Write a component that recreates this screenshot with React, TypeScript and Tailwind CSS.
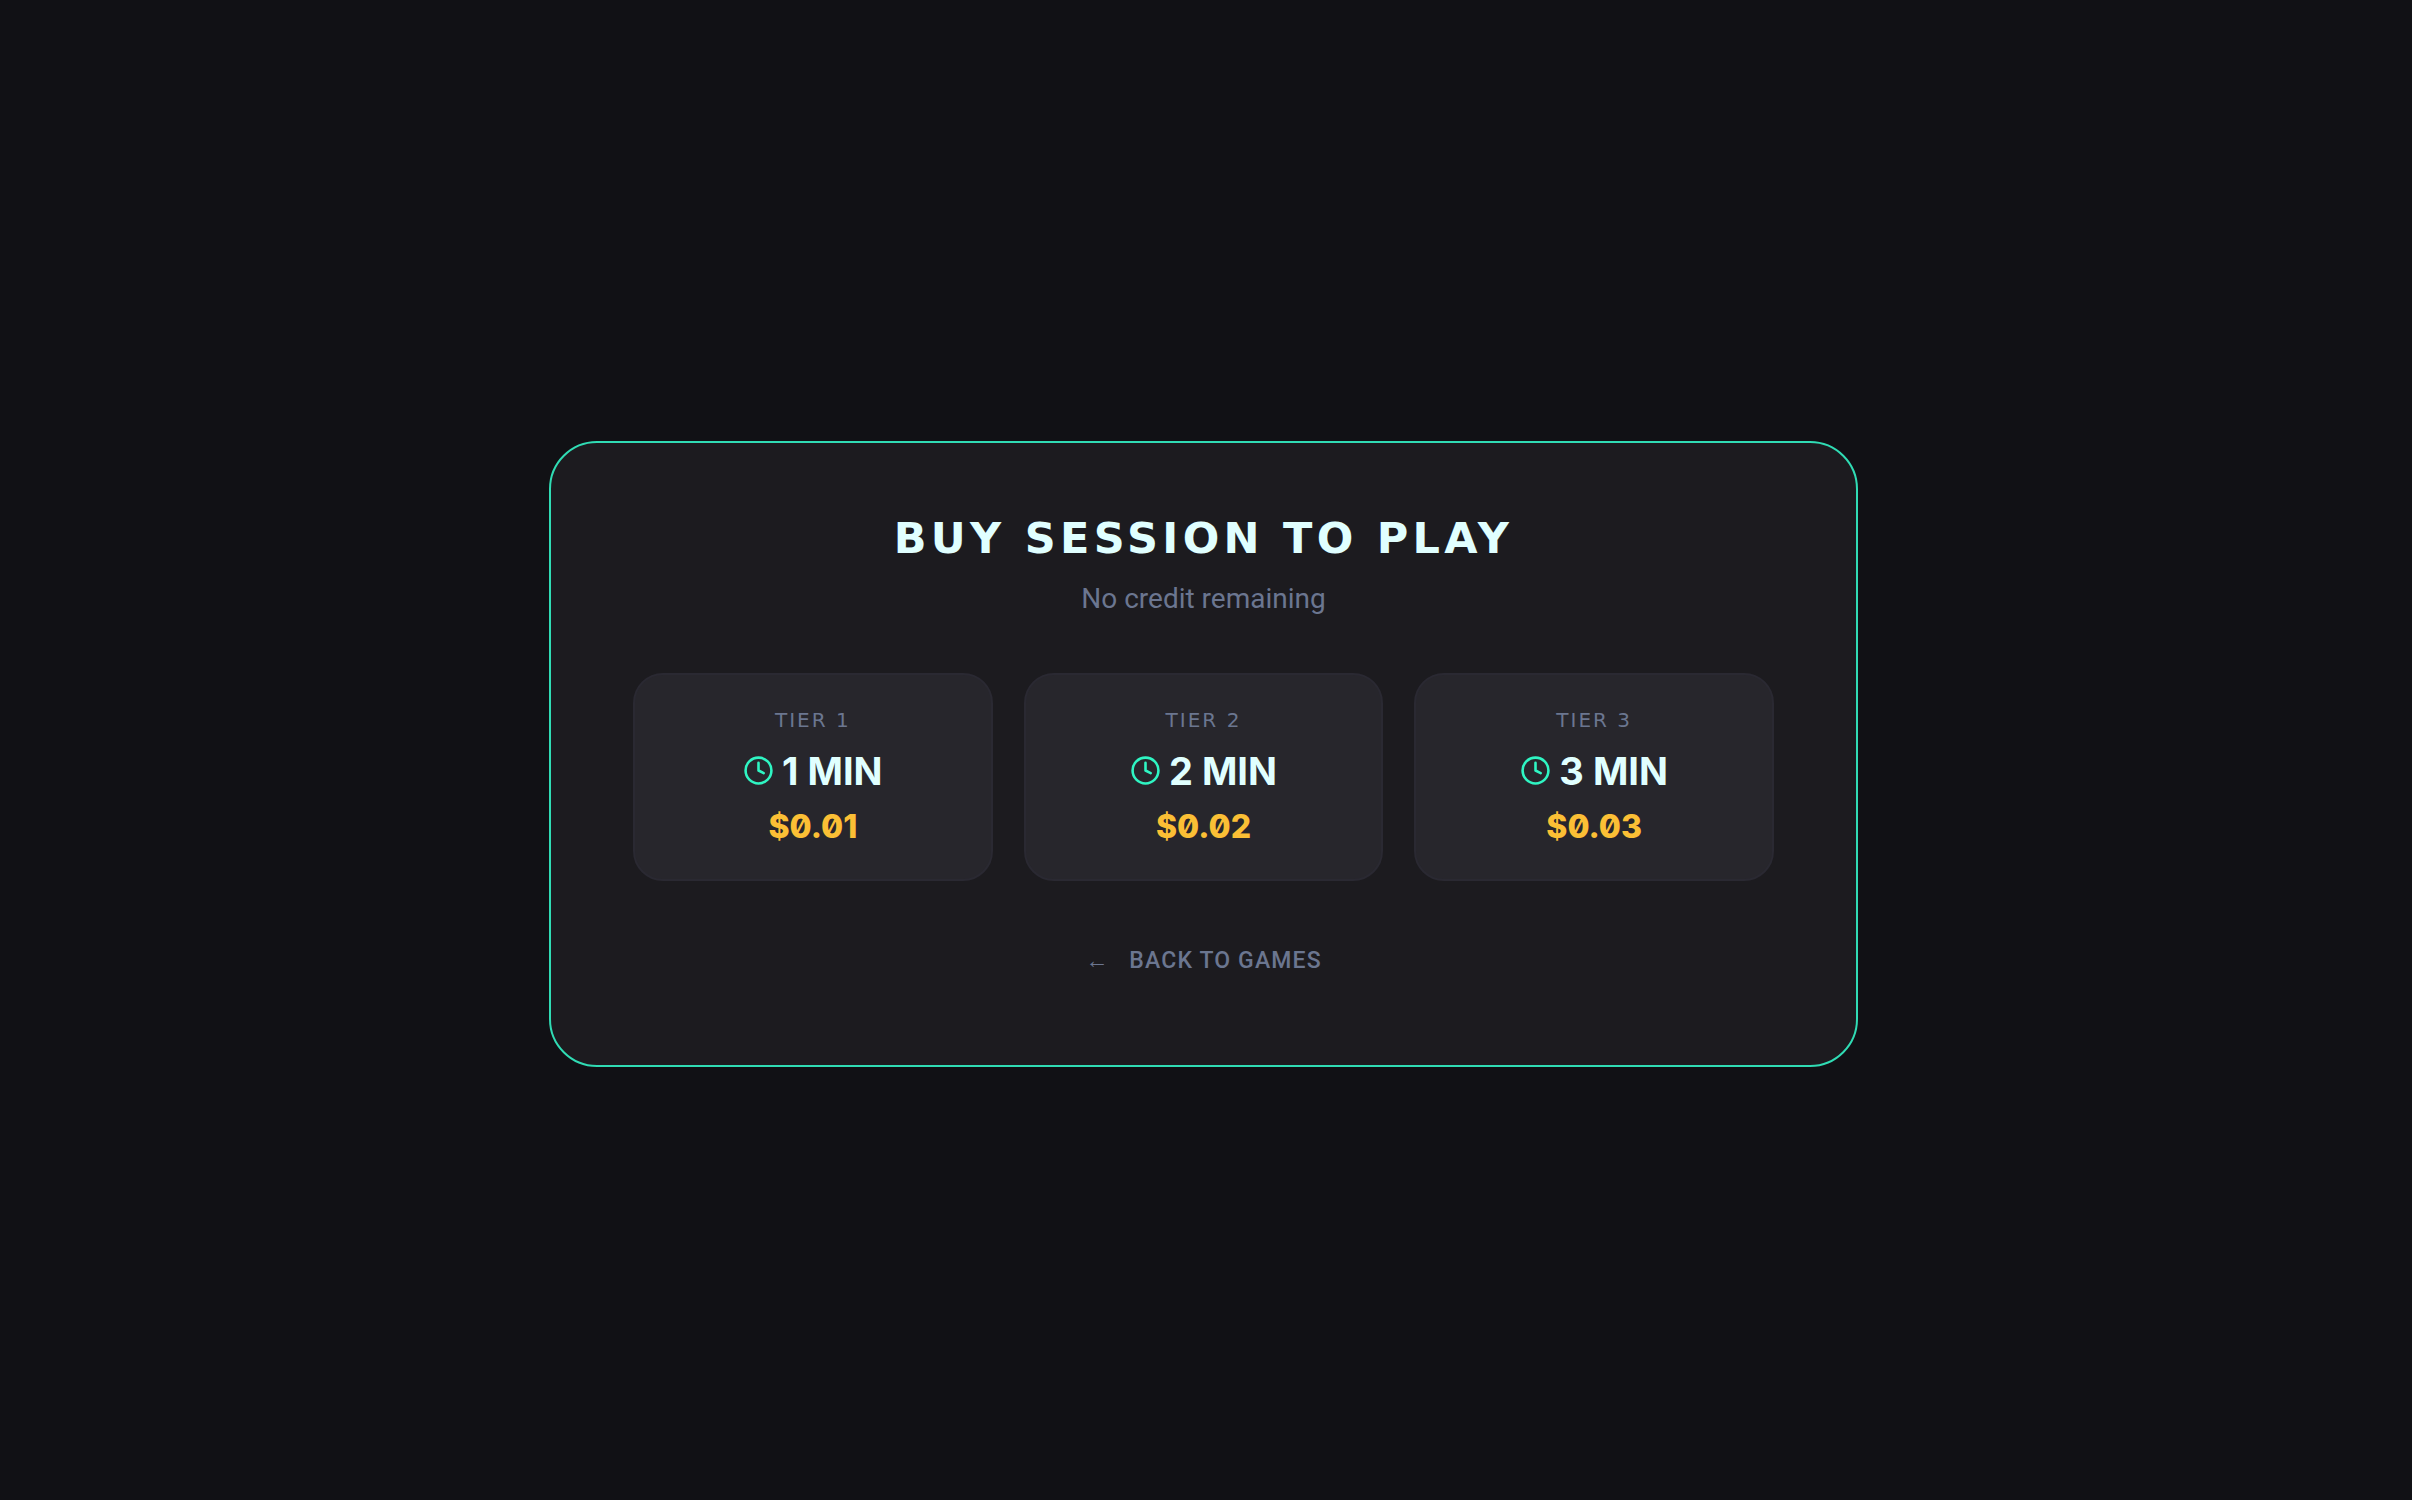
import { Clock } from "lucide-react";

interface Tier {
  id: number;
  minutes: number;
  price: string;
}

const TIERS: Tier[] = [
  { id: 1, minutes: 1, price: "$0.01" },
  { id: 2, minutes: 2, price: "$0.02" },
  { id: 3, minutes: 3, price: "$0.03" },
];

function TierCard({ tier }: { tier: Tier }) {
  return (
    <button
      type="button"
      className="flex flex-col items-center rounded-[30px] border-2 border-[#2a2932] bg-[#27262c] px-6 py-[30px] cursor-pointer hover:border-[#2de6b8] transition-colors"
    >
      <span className="font-['DejaVu_Sans',sans-serif] text-[20px] leading-[30px] tracking-widest text-[#6b7690]">
        TIER {tier.id}
      </span>
      <span className="mt-[14px] flex items-center gap-2 text-[38px] leading-11 font-bold text-[#e0ffff]">
        <Clock size={31} className="text-[#2ff5c3]" />
        {tier.minutes} MIN
      </span>
      <span className="mt-3 text-[32px] leading-11 font-extrabold slashed-zero text-[#fbbf35]">{tier.price}</span>
    </button>
  );
}

export default function App() {
  return (
    <main className="flex min-h-screen items-center justify-center bg-[#111115] pt-[7px] pr-[5px] font-['Inter',sans-serif]">
      <section className="w-full max-w-[1309px] rounded-[48px] border-2 border-[#30dcb4] bg-[#1c1b1f] px-[82px] pt-[70px] pb-[72px] text-center">
        <h1 className="font-['DejaVu_Sans',sans-serif] text-[43px] leading-[50px] font-bold tracking-widest text-[#e0ffff]">
          BUY SESSION TO PLAY
        </h1>
        <p className="mt-4 font-['Roboto',sans-serif] text-[28px] leading-10 text-[#6b7690]">No credit remaining</p>

        <div className="mt-[54px] grid grid-cols-1 md:grid-cols-3 gap-[31px]">
          {TIERS.map((tier) => (
            <TierCard key={tier.id} tier={tier} />
          ))}
        </div>

        <button
          type="button"
          className="mt-12 inline-flex items-center gap-5 px-6 py-4 font-['Roboto',sans-serif] text-[23px] leading-8 font-medium tracking-wider text-[#6b7690] cursor-pointer hover:text-[#e0ffff] transition-colors"
        >
          <span>←</span>
          <span>BACK TO GAMES</span>
        </button>
      </section>
    </main>
  );
}
